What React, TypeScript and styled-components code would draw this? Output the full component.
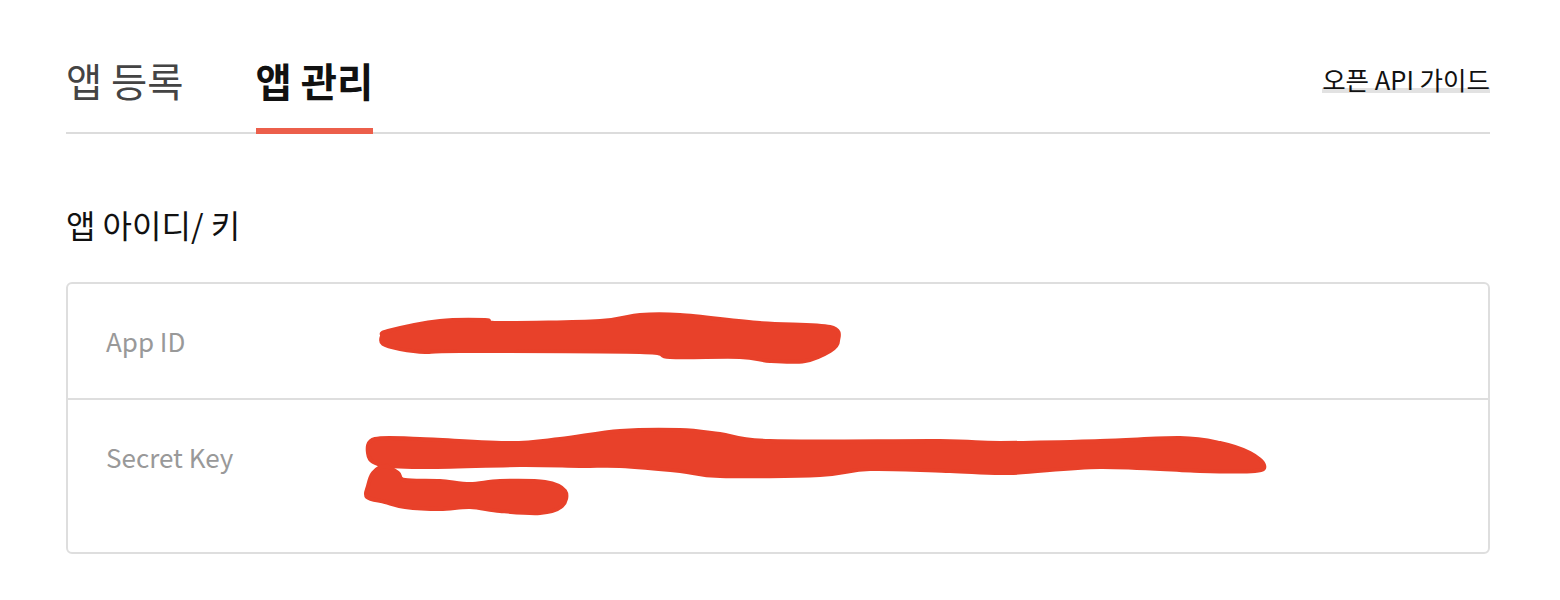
import styled, { createGlobalStyle } from "styled-components";

const GlobalStyle = createGlobalStyle`
  body {
    margin: 0;
    background: #fff;
    font-family: "Noto Sans CJK KR", "Noto Sans", sans-serif;
    color: #111;
  }
`;

const SCRIBBLE = "#e8412a";

type Pt = [number, number];

// closed catmull-rom curve through the outline points
const toPath = (pts: Pt[]) => {
  const n = pts.length;
  const at = (i: number) => pts[(i + n) % n];
  let d = `M${pts[0][0]} ${pts[0][1]}`;
  for (let i = 0; i < n; i++) {
    const p0 = at(i - 1);
    const p1 = at(i);
    const p2 = at(i + 1);
    const p3 = at(i + 2);
    const c1x = p1[0] + (p2[0] - p0[0]) / 6;
    const c1y = p1[1] + (p2[1] - p0[1]) / 6;
    const c2x = p2[0] - (p3[0] - p1[0]) / 6;
    const c2y = p2[1] - (p3[1] - p1[1]) / 6;
    d += ` C${c1x.toFixed(1)} ${c1y.toFixed(1)} ${c2x.toFixed(1)} ${c2y.toFixed(1)} ${p2[0]} ${p2[1]}`;
  }
  return d + " Z";
};

// redaction marks drawn over the key values
const idMark: Pt[][] = [
  [
    [22, 7], [74, -3], [119, -4], [134, -1], [234, -3], [274, -9], [314, -9],
    [394, -1], [464, 3], [472, 17], [464, 27], [439, 37], [404, 37], [374, 33],
    [304, 33], [274, 28], [94, 27], [59, 28], [34, 25], [17, 20], [16, 12],
  ],
];

const keyMark: Pt[][] = [
  [
    [9, -1], [54, -1], [144, 3], [194, -1], [254, -9], [314, -10], [354, -6],
    [404, 1], [574, 1], [634, 3], [734, 1], [814, -2], [854, 3], [884, 13],
    [898, 25], [889, 31], [834, 31], [734, 27], [644, 33], [584, 31], [504, 29],
    [454, 35], [354, 36], [314, 31], [254, 26], [214, 26], [154, 25], [54, 27],
    [12, 24], [2, 13],
  ],
  [
    [7, 33], [19, 26], [32, 33], [39, 40], [74, 41], [104, 44], [134, 41],
    [179, 42], [199, 51], [196, 66], [174, 73], [134, 71], [104, 67], [74, 69],
    [39, 67], [19, 62], [1, 57], [2, 46],
  ],
];

const Redacted = ({ marks, width, height }: { marks: Pt[][]; width: number; height: number }) => (
  <Mark width={width} height={height} viewBox={`0 0 ${width} ${height}`}>
    {marks.map((m, i) => (
      <path
        key={i}
        d={toPath(m)}
        fill={SCRIBBLE}
        stroke={SCRIBBLE}
        strokeWidth={4}
        strokeLinejoin="round"
      />
    ))}
  </Mark>
);

const App = () => {
  return (
    <>
      <GlobalStyle />
      <Page>
        <TabBar>
          <Tab>앱 등록</Tab>
          <Tab $active>앱 관리</Tab>
          <GuideLink href="#">오픈 API 가이드</GuideLink>
        </TabBar>

        <SectionTitle>앱 아이디/ 키</SectionTitle>

        <KeyCard>
          <KeyRow>
            <Label>App ID</Label>
            <Value>
              <Redacted marks={idMark} width={480} height={34} />
            </Value>
          </KeyRow>
          <KeyRow>
            <Label>Secret Key</Label>
            <Value>
              <Redacted marks={keyMark} width={900} height={73} />
            </Value>
          </KeyRow>
        </KeyCard>
      </Page>
    </>
  );
};

export default App;

const Page = styled.div`
  padding: 54px 70px 48px 66px;
`;

const TabBar = styled.nav`
  display: flex;
  align-items: flex-start;
  gap: 72px;
  border-bottom: 2px solid #dcdcdc;
`;

const Tab = styled.div<{ $active?: boolean }>`
  font-size: 39.4px;
  line-height: 52px;
  font-weight: ${(p) => (p.$active ? 700 : 400)};
  color: ${(p) => (p.$active ? "#111" : "#444")};
  padding-bottom: 22px;
  margin-bottom: -2px;
  border-bottom: 6px solid ${(p) => (p.$active ? "#ec5f4b" : "transparent")};
`;

const GuideLink = styled.a`
  margin-left: auto;
  margin-top: 13px;
  font-size: 25.5px;
  line-height: 24px;
  padding-bottom: 2px;
  color: #111;
  text-decoration: none;
  box-shadow: inset 0 -5px 0 #e2e2e2;
`;

const SectionTitle = styled.h2`
  margin: 68px 0 36px;
  font-size: 32px;
  line-height: 44px;
  font-weight: 400;
  color: #111;
`;

const KeyCard = styled.section`
  border: 2px solid #dedede;
  border-radius: 6px;
`;

const KeyRow = styled.div`
  display: grid;
  grid-template-columns: 260px 1fr;
  padding: 40px 38px;
  &:last-child {
    padding-bottom: 39px;
  }
  & + & {
    border-top: 2px solid #dedede;
  }
`;

const Label = styled.div`
  font-size: 26px;
  line-height: 34px;
  color: #999;
`;

const Value = styled.div`
  line-height: 0;
`;

const Mark = styled.svg`
  display: block;
  overflow: visible;
`;
